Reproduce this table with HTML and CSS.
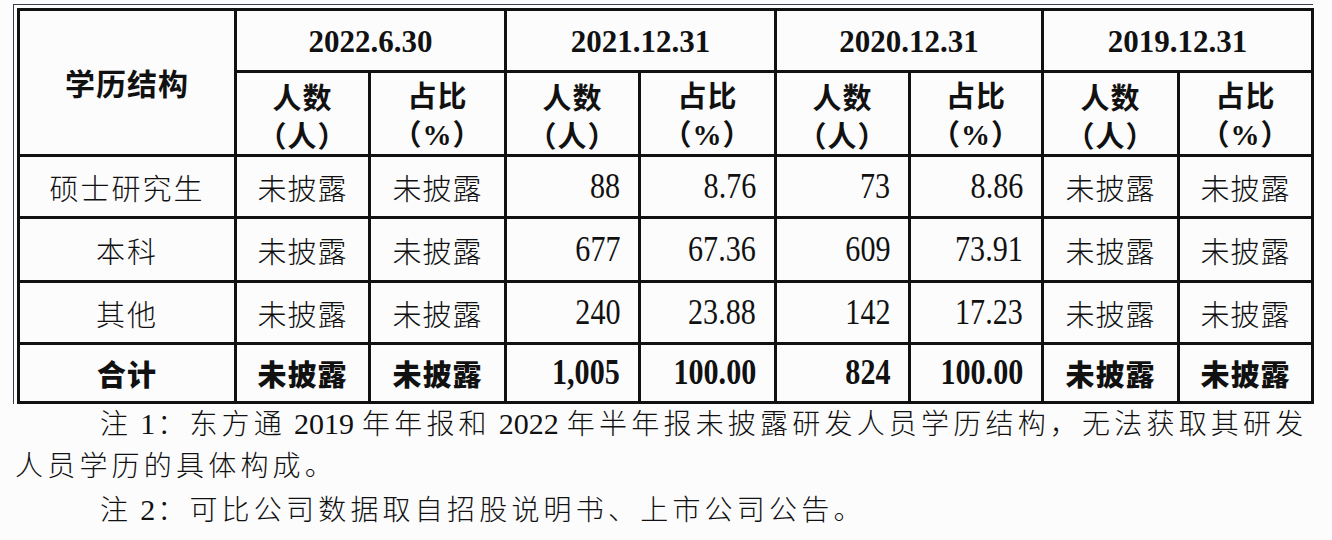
FILE: index.html
```html
<!DOCTYPE html>
<html lang="zh-CN">
<head>
<meta charset="utf-8">
<title>学历结构</title>
<link rel="stylesheet" href="styles.css">
</head>
<body>
<div class="frame">
  <table class="edu">
    <colgroup>
      <col class="c-first">
      <col class="c-a"><col class="c-b">
      <col class="c-a"><col class="c-b">
      <col class="c-a"><col class="c-c">
      <col class="c-b"><col class="c-a">
    </colgroup>
    <thead>
      <tr class="r-date">
        <th rowspan="2" class="hd-main">学历结构</th>
        <th colspan="2" class="hd-date">2022.6.30</th>
        <th colspan="2" class="hd-date">2021.12.31</th>
        <th colspan="2" class="hd-date">2020.12.31</th>
        <th colspan="2" class="hd-date">2019.12.31</th>
      </tr>
      <tr class="r-sub">
        <th class="hd-sub">人数<br>（人）</th>
        <th class="hd-sub">占比<br>（<span class="pct">%</span>）</th>
        <th class="hd-sub">人数<br>（人）</th>
        <th class="hd-sub">占比<br>（<span class="pct">%</span>）</th>
        <th class="hd-sub">人数<br>（人）</th>
        <th class="hd-sub">占比<br>（<span class="pct">%</span>）</th>
        <th class="hd-sub">人数<br>（人）</th>
        <th class="hd-sub">占比<br>（<span class="pct">%</span>）</th>
      </tr>
    </thead>
    <tbody>
      <tr class="r-1">
        <td class="label">硕士研究生</td>
        <td class="na">未披露</td><td class="na">未披露</td>
        <td class="num"><span>88</span></td><td class="num"><span>8.76</span></td>
        <td class="num"><span>73</span></td><td class="num"><span>8.86</span></td>
        <td class="na">未披露</td><td class="na">未披露</td>
      </tr>
      <tr class="r-2">
        <td class="label">本科</td>
        <td class="na">未披露</td><td class="na">未披露</td>
        <td class="num"><span>677</span></td><td class="num"><span>67.36</span></td>
        <td class="num"><span>609</span></td><td class="num"><span>73.91</span></td>
        <td class="na">未披露</td><td class="na">未披露</td>
      </tr>
      <tr class="r-3">
        <td class="label">其他</td>
        <td class="na">未披露</td><td class="na">未披露</td>
        <td class="num"><span>240</span></td><td class="num"><span>23.88</span></td>
        <td class="num"><span>142</span></td><td class="num"><span>17.23</span></td>
        <td class="na">未披露</td><td class="na">未披露</td>
      </tr>
      <tr class="r-total">
        <td class="label">合计</td>
        <td class="na">未披露</td><td class="na">未披露</td>
        <td class="num"><span>1,005</span></td><td class="num"><span>100.00</span></td>
        <td class="num"><span>824</span></td><td class="num"><span>100.00</span></td>
        <td class="na">未披露</td><td class="na">未披露</td>
      </tr>
    </tbody>
  </table>
</div>
<div class="notes">
  <p class="note note-1">注<span class="d n">1</span>：东方通<span class="d">2019</span>年年报和<span class="d">2022</span>年半年报未披露研发人员学历结构，无法获取其研发<br>人员学历的具体构成。</p>
  <p class="note note-2">注<span class="d n">2</span>：可比公司数据取自招股说明书、上市公司公告。</p>
</div>
</body>
</html>
```

FILE: styles.css
```css
html, body {
  margin: 0;
  padding: 0;
  background: #fcfcfd;
}

body {
  width: 1332px;
  height: 540px;
  overflow: hidden;
  color: #111;
  font-family: "Noto Sans CJK SC", sans-serif;
}

.frame {
  margin: 4px 0 0 13px;
  border-top: 1px solid #3a3d52;
  border-left: 1px solid #3a3d52;
  padding: 3px 0 0 3px;
  width: 1296px;
}

.edu {
  border-collapse: separate;
  border-spacing: 0;
  table-layout: fixed;
  width: 1296px;
  border-top: 3px solid #111;
  border-left: 3px solid #111;
}

.c-first { width: 217px; }
.c-a { width: 134px; }
.c-b { width: 136px; }
.c-c { width: 133px; }

.edu th,
.edu td {
  box-sizing: border-box;
  border-right: 3px solid #111;
  border-bottom: 3px solid #111;
  padding: 0;
  text-align: center;
  vertical-align: middle;
  white-space: nowrap;
}

.edu .r-date th { height: 62px; }
.edu .r-sub th { height: 84px; }
.edu .r-1 td { height: 62px; }
.edu .r-2 td { height: 64px; }
.edu .r-3 td { height: 62px; }
.edu .r-total td { height: 59px; }

.edu .hd-main {
  font-family: "Noto Sans CJK SC", sans-serif;
  font-weight: 700;
  font-size: 30px;
  letter-spacing: 1px;
  padding-bottom: 2px;
}

.edu .hd-date {
  font-family: "Liberation Serif", serif;
  font-weight: 700;
  font-size: 31px;
  padding-top: 2px;
}

.edu .hd-sub {
  font-family: "Noto Sans CJK SC", sans-serif;
  font-weight: 700;
  font-size: 29px;
  line-height: 38px;
  letter-spacing: 1px;
  padding-top: 2px;
}

.pct {
  font-family: "Liberation Serif", serif;
  font-weight: 700;
}

.edu .label,
.edu .na {
  font-family: "Noto Sans CJK SC", sans-serif;
  font-weight: 300;
  font-size: 29px;
  letter-spacing: 2px;
}

.edu .na { letter-spacing: 1px; }

.edu .num {
  text-align: right;
  padding-right: 18px;
  font-family: "Liberation Serif", serif;
  font-size: 35px;
}

.num span {
  display: inline-block;
  transform: scaleX(0.86);
  transform-origin: right center;
}

.edu .r-total td {
  font-weight: 700;
}

.edu .r-total .label,
.edu .r-total .na {
  font-family: "Noto Sans CJK SC", sans-serif;
  font-weight: 900;
  letter-spacing: 1px;
}

.notes {
  margin: -2px 0 0 15px;
  width: 1310px;
}

.note {
  margin: 0;
  font-family: "Noto Sans CJK SC", sans-serif;
  font-weight: 300;
  font-size: 28px;
  line-height: 41px;
  letter-spacing: 4.2px;
  text-indent: 85px;
  white-space: nowrap;
}

.note-2 { margin-top: 3px; }

.d {
  font-family: "Liberation Serif", serif;
  font-size: 30px;
  letter-spacing: 0;
  padding: 0 8px;
}

.d.n { padding: 0 2px 0 8px; }
```
